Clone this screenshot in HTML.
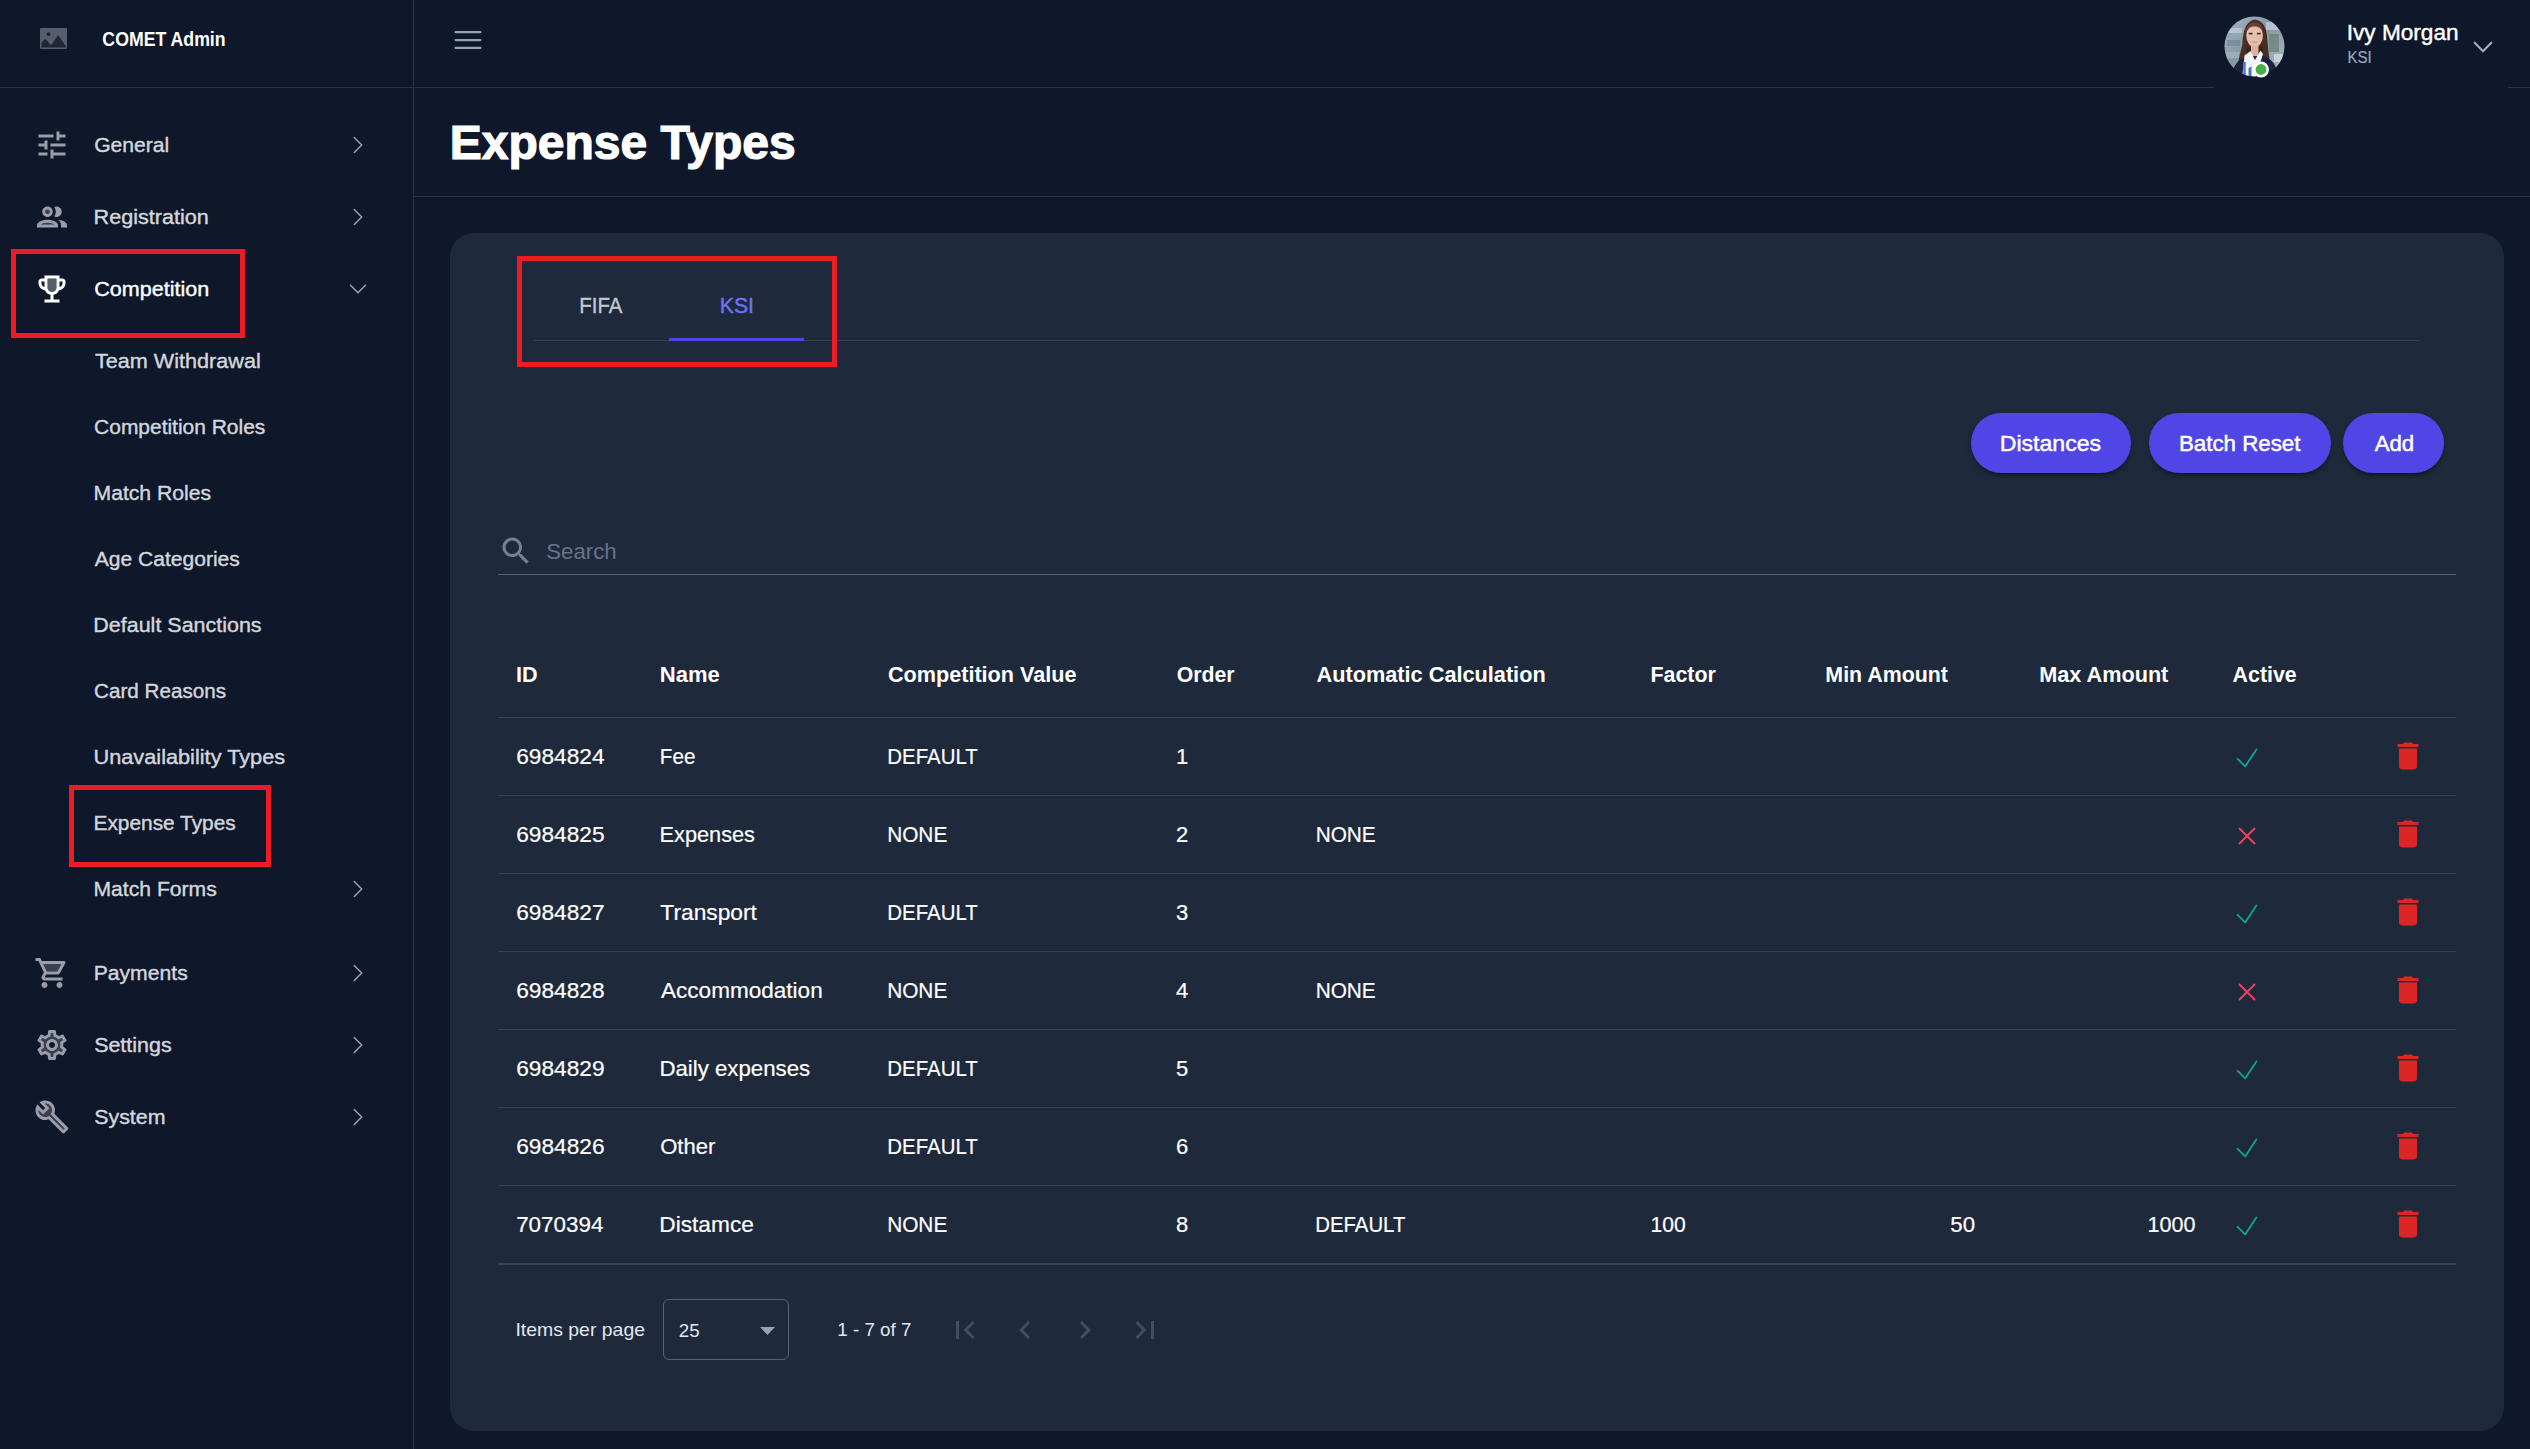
<!DOCTYPE html>
<html lang="en">
<head>
<meta charset="utf-8">
<title>Expense Types - COMET Admin</title>
<style>
*{box-sizing:border-box;margin:0;padding:0}
html{background:#0f172a}
html,body{width:2530px;height:1449px}
body{overflow:hidden;background:#0f172a}
body{font-family:"Liberation Sans",sans-serif;color:#fff;position:relative}
a{text-decoration:none;color:inherit;display:block}
.t{position:absolute;white-space:nowrap;line-height:1;transform:translate(var(--dx,0px),-50%) scaleX(var(--sx,1));transform-origin:left center}
.s{display:inline-block;white-space:nowrap;transform:translateX(var(--dx,0px)) scaleX(var(--sx,1));transform-origin:left center}
svg{display:block;position:absolute;overflow:visible}

/* ---------- sidebar ---------- */
#sidebar{position:absolute;left:0;top:0;width:414px;height:1449px;background:#0f172a;border-right:1px solid #2a3245}
#brand{position:absolute;left:0;top:0;width:413px;height:88px;border-bottom:1px solid #2a3245}
#brand .name{left:102px;top:40px;font-size:19.5px;font-weight:700;color:#fff}
nav .item{position:absolute;left:0;width:413px;height:72px}
nav .item .lbl{left:94px;top:36px;font-size:20.5px;color:#d3d6dc;-webkit-text-stroke:.4px #d3d6dc}
nav .item.active .lbl{color:#fff;-webkit-text-stroke:.4px #fff}
nav .item .ico{left:34px;top:18px;width:36px;height:36px;fill:#9a9eaa}
nav .item.active .ico{fill:#fff}
nav .item .chev{left:346px;top:24px;width:24px;height:24px;fill:none;stroke:#98a4ba;stroke-width:1.5;stroke-linecap:round;stroke-linejoin:round}
nav .sub{height:66px}
nav .sub .lbl{top:33px}
nav .sub .chev{top:21px}
.redbox{position:absolute;border:5px solid #ed1c24;pointer-events:none}

/* ---------- top bar ---------- */
#topbar{position:absolute;left:414px;top:0;width:2116px;height:88px;border-bottom:1px solid #2a3245}
#topbar .menu{left:36px;top:22px;width:36px;height:36px;fill:none;stroke:#94a3b8;stroke-width:1.5;stroke-linecap:round}
#user{position:absolute;left:1800px;top:0;width:294px;height:88px;background:#0f172a}
#user .who{left:134px;top:33px;font-size:22px;color:#fff;-webkit-text-stroke:.4px #fff}
#user .org{left:134px;top:57px;font-size:17px;color:#9aa7ba;-webkit-text-stroke:.2px #9aa7ba}
#user .dd{left:251px;top:29px;width:36px;height:36px;fill:none;stroke:#9fb0ca;stroke-width:1.15;stroke-linecap:round;stroke-linejoin:round}
#user .avatar{left:10px;top:16px;width:61px;height:62px}
#titlebar{position:absolute;left:414px;top:88px;width:2116px;height:109px;border-bottom:1px solid #2a3245}
#titlebar h1{left:37px;top:55px;font-size:48px;font-weight:700;color:#fff;-webkit-text-stroke:1.2px #fff}

/* ---------- card ---------- */
#card{position:absolute;left:450px;top:233px;width:2054px;height:1198px;border-radius:24px;background:#1e293b}
#tabs{position:absolute;left:84px;top:36px;width:1886px;height:72px;border-bottom:1px solid #354052}
#tabs .tab{position:absolute;top:0;width:135px;height:72px;text-align:center;font-size:22px;line-height:73px;color:#c3c8d0;-webkit-text-stroke:.4px currentColor}
#tabs .tab.on{color:#6e72f4}
#tabs .ink{position:absolute;left:135px;top:69px;width:135px;height:3px;background:#4f46e5}
#actions{position:absolute;right:60px;top:180px;height:60px;display:flex}
#actions .btn{height:60px;border-radius:30px;background:#4f46e5;color:#fff;font-size:21.5px;font-weight:400;-webkit-text-stroke:.45px #fff;line-height:62px;text-align:center;box-shadow:0 4px 3px -2px rgba(0,0,0,.3),0 3px 6px 0 rgba(0,0,0,.2)}
#search{position:absolute;left:48px;top:300px;width:1958px;height:42px;border-bottom:1px solid #56627a}
#search .mag{left:0;top:0;width:36px;height:36px;fill:#72819a}
#search .ph{left:48px;top:19px;font-size:22px;color:#64748b}

#grid{position:absolute;left:48px;top:400px;width:1958px;border-collapse:collapse;table-layout:fixed;font-size:22px}
#grid th,#grid td{padding:0 0 0 18px;text-align:left;white-space:nowrap;position:relative;border-bottom:1px solid #354052;overflow:visible}
#grid th{height:84px;padding-top:1px;font-weight:700;font-size:22px}
#grid td{height:78px;padding-top:2px;font-weight:400;-webkit-text-stroke:.2px #fff}
#grid tbody tr:last-child td{border-bottom:1px solid #3b4557}
.s.c{transform-origin:center center}
#grid .c-min,#grid .c-max{text-align:right}
#grid td.c-min .s,#grid td.c-max .s{transform-origin:right center}
#grid th.c-min,#grid th.c-max{text-align:left}
#grid td.c-min{padding-right:47px}
#grid td.c-max{padding-right:18px}
#grid svg.ok,#grid svg.no{left:18px;top:25px;width:30px;height:30px;fill:none;stroke-width:1.5;stroke-linecap:round;stroke-linejoin:round}
#grid svg.ok{stroke:#10a293}
#grid svg.no{stroke:#f43f5e}
#grid svg.del{left:17.800px;top:20.600px;width:36px;height:36px;fill:#dc2626}

#pager{position:absolute;left:48px;top:1031px;width:1958px;height:130px;border-top:1px solid #3b4557;font-size:19px;color:#e2e8f0}
#pager .lab{left:18px;top:64px}
#pager .sel{position:absolute;left:165px;top:34px;width:126px;height:61px;border:1px solid #56627a;border-radius:6px}
#pager .sel .v{left:14px;top:30px}
#pager .sel svg{left:96px;top:27px;width:15px;height:8px;fill:#94a3b8}
#pager .rng{left:339px;top:64px}
#pager .nav{top:47px;width:36px;height:36px;fill:#414d61}
</style>
</head>
<body>

<aside id="sidebar">
  <div id="brand">
    <svg style="left:40px;top:28px" width="27" height="21" viewBox="0 0 27 21"><rect width="27" height="21" rx="1" fill="#555d6f"/><path d="M1.500 14.500 5.300 10.800 11 17.300 18.200 7 26 18.500V19.500H1.500z" fill="#1f2636"/><circle cx="8.500" cy="6.200" r="1.900" fill="#1f2636"/></svg>
    <span class="t name" style="--sx:0.9079;--dx:0.34px">COMET Admin</span>
  </div>
  <nav id="nav">
    <a class="item" style="top:109px"><svg class="ico" viewBox="0 0 24 24"><path d="M3 17v2h6v-2H3zM3 5v2h10V5H3zm10 16v-2h8v-2h-8v-2h-2v6h2zM7 9v2H3v2h4v2h2V9H7zm14 4v-2H11v2h10zm-6-4h2V7h4V5h-4V3h-2v6z"/></svg><span class="t lbl" style="--sx:1.0291;--dx:0.16px">General</span><svg class="chev" viewBox="0 0 24 24"><path d="M8.250 4.500l7.500 7.500-7.500 7.500"/></svg></a>
    <a class="item" style="top:181px"><svg class="ico" viewBox="0 0 24 24"><circle cx="9" cy="8.5" r="1.5" opacity=".3"/><path d="M4.34 17h9.32c-.84-.58-2.87-1.25-4.66-1.25s-3.82.67-4.66 1.25z" opacity=".3"/><path d="M9 12c1.93 0 3.500-1.570 3.500-3.500S10.930 5 9 5 5.500 6.570 5.500 8.500 7.070 12 9 12zm0-5c.83 0 1.500.67 1.500 1.500S9.830 10 9 10s-1.500-.67-1.500-1.500S8.170 7 9 7zm0 6.750c-2.340 0-7 1.170-7 3.500V19h14v-1.750c0-2.330-4.660-3.500-7-3.500zM4.340 17c.84-.58 2.870-1.250 4.660-1.250s3.820.67 4.660 1.250H4.340zm11.700-3.190c1.160.84 1.960 1.960 1.960 3.440V19h4v-1.750c0-2.020-3.500-3.170-5.960-3.440zM15 12c1.930 0 3.500-1.570 3.500-3.500S16.930 5 15 5c-.54 0-1.040.13-1.500.35.63.89 1 1.980 1 3.150s-.37 2.260-1 3.150c.46.22.96.35 1.500.35z"/></svg><span class="t lbl" style="--sx:1.0531;--dx:-0.41px">Registration</span><svg class="chev" viewBox="0 0 24 24"><path d="M8.250 4.500l7.500 7.500-7.500 7.500"/></svg></a>
    <a class="item active" style="top:253px"><svg class="ico" viewBox="0 0 24 24"><path d="M12 14c-1.650 0-3-1.350-3-3V5h6v6c0 1.650-1.350 3-3 3z" opacity=".3"/><path d="M19 5h-2V3H7v2H5c-1.100 0-2 .9-2 2v1c0 2.550 1.920 4.630 4.390 4.940.63 1.500 1.980 2.630 3.610 2.960V19H7v2h10v-2h-4v-3.100c1.630-.33 2.980-1.460 3.610-2.960C19.080 12.630 21 10.550 21 8V7c0-1.100-.9-2-2-2zM5 8V7h2v3.820C5.840 10.400 5 9.300 5 8zm7 6c-1.650 0-3-1.350-3-3V5h6v6c0 1.650-1.350 3-3 3zm7-6c0 1.300-.84 2.400-2 2.820V7h2v1z"/></svg><span class="t lbl" style="--sx:1.0510;--dx:0.28px">Competition</span><svg class="chev" viewBox="0 0 24 24"><path d="M19.500 8.250l-7.500 7.500-7.500-7.500"/></svg></a>
    <a class="item sub" style="top:328px"><span class="t lbl" style="--sx:1.0551;--dx:0.91px">Team Withdrawal</span></a>
    <a class="item sub" style="top:394px"><span class="t lbl" style="--sx:1.0220;--dx:0.10px">Competition Roles</span></a>
    <a class="item sub" style="top:460px"><span class="t lbl" style="--sx:1.0309;--dx:-0.46px">Match Roles</span></a>
    <a class="item sub" style="top:526px"><span class="t lbl" style="--sx:1.0255;--dx:0.85px">Age Categories</span></a>
    <a class="item sub" style="top:592px"><span class="t lbl" style="--sx:1.0469;--dx:-0.65px">Default Sanctions</span></a>
    <a class="item sub" style="top:658px"><span class="t lbl" style="--sx:1.0073;--dx:0.04px">Card Reasons</span></a>
    <a class="item sub" style="top:724px"><span class="t lbl" style="--sx:1.0597;--dx:-0.49px">Unavailability Types</span></a>
    <a class="item sub current" style="top:790px"><span class="t lbl" style="--sx:1.0174;--dx:-0.49px">Expense Types</span></a>
    <a class="item sub" style="top:856px"><span class="t lbl" style="--sx:1.0307;--dx:-0.50px">Match Forms</span><svg class="chev" viewBox="0 0 24 24"><path d="M8.250 4.500l7.500 7.500-7.500 7.500"/></svg></a>
    <a class="item" style="top:937px"><svg class="ico" viewBox="0 0 24 24"><path d="M15.550 11l2.760-5H6.160l2.370 5z" opacity=".3"/><path d="M15.550 13c.75 0 1.410-.41 1.750-1.030l3.580-6.490c.37-.66-.11-1.480-.87-1.480H5.210l-.94-2H1v2h2l3.600 7.590-1.350 2.440C4.520 15.370 5.480 17 7 17h12v-2H7l1.100-2h7.450zM6.160 6h12.150l-2.760 5H8.530L6.160 6zM7 18c-1.100 0-1.990.9-1.990 2S5.900 22 7 22s2-.9 2-2-.9-2-2-2zm10 0c-1.100 0-1.990.9-1.990 2s.89 2 1.990 2 2-.9 2-2-.9-2-2-2z"/></svg><span class="t lbl" style="--sx:1.0325;--dx:-0.36px">Payments</span><svg class="chev" viewBox="0 0 24 24"><path d="M8.250 4.500l7.500 7.500-7.500 7.500"/></svg></a>
    <a class="item" style="top:1009px"><svg class="ico" viewBox="0 0 24 24"><path d="M19.28 8.6l-0.7-1.21-1.27 0.51-1.06 0.43-0.91-0.7c-0.39-0.3-0.8-0.54-1.23-0.71l-1.06-0.43-0.16-1.13L12.7 4h-1.4l-0.19 1.35-0.16 1.13-1.06 0.44c-0.41 0.17-0.82 0.41-1.25 0.73l-0.9 0.68-1.05-0.42-1.27-0.51-0.7 1.21 1.08 0.84 0.89 0.7-0.14 1.13c-0.03 0.3-0.05 0.53-0.05 0.73s0.02 0.43 0.05 0.73l0.14 1.13-0.89 0.7-1.08 0.84 0.7 1.21 1.27-0.51 1.06-0.43 0.91 0.7c0.39 0.3 0.8 0.54 1.23 0.71l1.06 0.43 0.16 1.13 0.19 1.36h1.39l0.19-1.35 0.16-1.13 1.06-0.43c0.41-0.17 0.82-0.41 1.25-0.73l0.9-0.68 1.04 0.42 1.27 0.51 0.7-1.21-1.08-0.84-0.89-0.7 0.14-1.13c0.04-0.31 0.05-0.52 0.05-0.73 0-0.21-0.02-0.43-0.05-0.73l-0.14-1.13 0.89-0.7 1.1-0.84zM12 16c-2.21 0-4-1.79-4-4s1.79-4 4-4 4 1.79 4 4-1.79 4-4 4z" opacity=".3"/><path d="M19.43 12.98c0.04-0.32 0.07-0.64 0.07-0.98 0-0.34-0.03-0.66-0.07-0.98l2.11-1.65c0.19-0.15 0.24-0.42 0.12-0.64l-2-3.46c-0.09-0.16-0.26-0.25-0.44-0.25-0.06 0-0.12 0.01-0.17 0.03l-2.49 1c-0.52-0.4-1.08-0.73-1.69-0.98l-0.38-2.65C14.46 2.18 14.25 2 14 2h-4c-0.25 0-0.46 0.18-0.49 0.42l-0.38 2.65c-0.61 0.25-1.17 0.59-1.69 0.98l-2.49-1c-0.06-0.02-0.12-0.03-0.18-0.03-0.17 0-0.34 0.09-0.43 0.25l-2 3.46c-0.13 0.22-0.07 0.49 0.12 0.64l2.11 1.65c-0.04 0.32-0.07 0.65-0.07 0.98 0 0.33 0.03 0.66 0.07 0.98l-2.11 1.65c-0.19 0.15-0.24 0.42-0.12 0.64l2 3.46c0.09 0.16 0.26 0.25 0.44 0.25 0.06 0 0.12-0.01 0.17-0.03l2.49-1c0.52 0.4 1.08 0.73 1.69 0.98l0.38 2.65c0.03 0.24 0.24 0.42 0.49 0.42h4c0.25 0 0.46-0.18 0.49-0.42l0.38-2.65c0.61-0.25 1.17-0.59 1.69-0.98l2.49 1c0.06 0.02 0.12 0.03 0.18 0.03 0.17 0 0.34-0.09 0.43-0.25l2-3.46c0.12-0.22 0.07-0.49-0.12-0.64l-2.11-1.65zm-1.98-1.71c0.04 0.31 0.05 0.52 0.05 0.73 0 0.21-0.02 0.43-0.05 0.73l-0.14 1.13 0.89 0.7 1.08 0.84-0.7 1.21-1.27-0.51-1.04-0.42-0.9 0.68c-0.43 0.32-0.84 0.56-1.25 0.73l-1.06 0.43-0.16 1.13-0.2 1.35h-1.4l-0.19-1.35-0.16-1.13-1.06-0.43c-0.43-0.18-0.83-0.41-1.23-0.71l-0.91-0.7-1.06 0.43-1.27 0.51-0.7-1.21 1.08-0.84 0.89-0.7-0.14-1.13c-0.03-0.31-0.05-0.54-0.05-0.74s0.02-0.43 0.05-0.73l0.14-1.13-0.89-0.7-1.08-0.84 0.7-1.21 1.27 0.51 1.04 0.42 0.9-0.68c0.43-0.32 0.84-0.56 1.25-0.73l1.06-0.43 0.16-1.13 0.2-1.35h1.39l0.19 1.35 0.16 1.13 1.06 0.43c0.43 0.18 0.83 0.41 1.23 0.71l0.91 0.7 1.06-0.43 1.27-0.51 0.7 1.21-1.07 0.85-0.89 0.7 0.14 1.13zM12 8c-2.21 0-4 1.79-4 4s1.79 4 4 4 4-1.79 4-4-1.79-4-4-4zm0 6c-1.1 0-2-0.9-2-2s0.9-2 2-2 2 0.9 2 2-0.9 2-2 2z"/></svg><span class="t lbl" style="--sx:1.0458;--dx:0.13px">Settings</span><svg class="chev" viewBox="0 0 24 24"><path d="M8.250 4.500l7.500 7.500-7.500 7.500"/></svg></a>
    <a class="item" style="top:1081px"><svg class="ico" viewBox="0 0 24 24"><path d="M11.920 8.280c.24-1.400-.16-2.890-1.240-3.960-.94-.95-2.200-1.390-3.440-1.320l3.090 3.090-4.240 4.240L3 7.240c-.07 1.240.37 2.490 1.310 3.440 1.040 1.040 2.470 1.450 3.830 1.250.71-.1 1.400-.38 2-.82l9.460 9.460.88-.88-9.450-9.450c.47-.6.77-1.260.89-1.960z" opacity=".3"/><path d="M22.610 18.970L13.540 9.900c.93-2.340.45-5.100-1.440-7C9.800.6 6.220.39 3.670 2.250L7.500 6.080 6.080 7.500 2.250 3.670C.39 6.210.6 9.790 2.900 12.090c1.860 1.860 4.570 2.350 6.890 1.480l9.110 9.110c.39.39 1.020.39 1.410 0l2.300-2.300c.4-.38.4-1.020 0-1.410zm-3 1.600l-9.460-9.460c-.61.45-1.290.72-2 .82-1.360.2-2.790-.21-3.830-1.250C3.370 9.740 2.930 8.490 3 7.250l3.090 3.090 4.240-4.240-3.090-3.090c1.240-.07 2.490.37 3.440 1.310 1.080 1.080 1.490 2.570 1.240 3.960-.12.7-.42 1.360-.88 1.950l9.450 9.450-.88.89z"/></svg><span class="t lbl" style="--sx:1.0424;--dx:0.21px">System</span><svg class="chev" viewBox="0 0 24 24"><path d="M8.250 4.500l7.500 7.500-7.500 7.500"/></svg></a>
    <div class="redbox" style="left:11px;top:249px;width:234px;height:89px"></div>
    <div class="redbox" style="left:69px;top:785px;width:202px;height:82px"></div>
  </nav>
</aside>

<header id="topbar">
  <svg class="menu" viewBox="0 0 24 24"><path d="M3.750 6.750h16.500M3.750 12h16.500M3.750 17.250h16.500"/></svg>
  <div id="user">
    <svg class="avatar" viewBox="0 0 61 62">
      <defs>
        <clipPath id="avc"><circle cx="30.5" cy="30.5" r="30"/></clipPath>
        <linearGradient id="avbg" x1="0" y1="0" x2="1" y2="1"><stop offset="0" stop-color="#a9bac6"/><stop offset=".45" stop-color="#8497a6"/><stop offset="1" stop-color="#b4bfc8"/></linearGradient>
        <filter id="avb" x="-10%" y="-10%" width="120%" height="120%"><feGaussianBlur stdDeviation=".7"/></filter>
      </defs>
      <g clip-path="url(#avc)"><g filter="url(#avb)">
        <rect x="-2" y="-2" width="65" height="66" fill="url(#avbg)"/>
        <rect x="2" y="12" width="16" height="5" fill="#c3d0d9" opacity=".7"/><rect x="3" y="24" width="13" height="6" fill="#71879a" opacity=".7"/>
        <rect x="1" y="36" width="14" height="6" fill="#9fb1bf" opacity=".8"/><rect x="42" y="6" width="12" height="8" fill="#c9d4dc" opacity=".7"/>
        <rect x="45" y="18" width="10" height="18" fill="#71857a" opacity=".8"/><rect x="50" y="38" width="9" height="8" fill="#d5dbe0" opacity=".8"/>
        <path d="M14 47c1-6 3-12 4.500-19C19 17 21 5 31 3.500 41 5 43 15 43.500 25c.5 8 1.500 15 2.500 22z" fill="#4a2d20"/>
        <path d="M22 31h17v12H22z" fill="#3b2419"/>
        <ellipse cx="30.600" cy="19.500" rx="8.300" ry="11.800" fill="#e4bfab"/>
        <path d="M22.300 17C22 10 25 6.500 30.500 6.500S39 10 39 17c-1.500-4-3.500-6.500-8.500-6.500S24 13 22.300 17z" fill="#6a4331"/>
        <rect x="24.500" y="16.700" width="4.300" height="1.700" rx=".8" fill="#4e362e"/><rect x="32.700" y="16.700" width="4.300" height="1.700" rx=".8" fill="#4e362e"/>
        <path d="M26.500 25.300q4.200 3.200 8.400 0-4.200 1-8.400 0z" fill="#c78488"/>
        <path d="M27 29.500h7.500V40H27z" fill="#dcb29c"/>
        <path d="M8 63c0-12 5-19 13-21.500l10 8 8-9.500c9 2.500 15 10 15 23z" fill="#1a2140"/>
        <path d="M20.500 39.500l6-4.500 4.500 9 5.500-9.500 2.500 3.500-8 25h-13z" fill="#f1f4f8"/>
        <path d="M19.300 46h2.400v16h-2.400zM24.500 52l3-1.500V62h-3z" fill="#4d72c6"/>
      </g></g>
      <circle cx="37" cy="53.500" r="8" fill="#fff"/><circle cx="37" cy="53.500" r="5.400" fill="#45b049"/>
    </svg>
    <span class="t who" style="--sx:1.0275;--dx:-1.23px">Ivy Morgan</span>
    <span class="t org" style="--sx:0.8828;--dx:-0.52px">KSI</span>
    <svg class="dd" viewBox="0 0 20 20"><path d="M5.4 7.6 10 12.4l4.6-4.8"/></svg>
  </div>
</header>

<section id="titlebar"><h1 class="t" style="--dx:-1.22px">Expense Types</h1></section>

<main id="card">
  <div id="tabs">
    <a class="tab" style="left:0"><span class="s c" style="--sx:0.9262;--dx:-0.39px">FIFA</span></a>
    <a class="tab on" style="left:135px"><span class="s c" style="--sx:0.9638;--dx:0.18px">KSI</span></a>
    <span class="ink"></span>
  </div>
  <div class="redbox" style="left:67px;top:23px;width:320px;height:111px"></div>

  <div id="actions">
    <a class="btn" style="width:160px"><span class="s c" style="--sx:1.0725;--dx:-0.76px">Distances</span></a>
    <a class="btn" style="width:182px;margin-left:18px"><span class="s c" style="--sx:1.0383;--dx:0.12px">Batch Reset</span></a>
    <a class="btn" style="width:101px;margin-left:12px"><span class="s c" style="--sx:1.0328;--dx:1.30px">Add</span></a>
  </div>

  <div id="search">
    <svg class="mag" viewBox="0 0 24 24"><path d="M15.500 14h-.79l-.28-.27C15.410 12.590 16 11.110 16 9.500 16 5.910 13.090 3 9.500 3S3 5.910 3 9.500 5.910 16 9.500 16c1.610 0 3.090-.59 4.230-1.570l.27.28v.79l5 4.990L20.490 19l-4.990-5zm-6 0C7.010 14 5 11.990 5 9.500S7.010 5 9.500 5 14 7.010 14 9.500 11.990 14 9.500 14z"/></svg>
    <span class="t ph" style="--sx:1.0105;--dx:0.28px">Search</span>
  </div>

  <table id="grid"><colgroup><col style="width:144px"><col style="width:228px"><col style="width:288px"><col style="width:140px"><col style="width:334px"><col style="width:175px"><col style="width:215px"><col style="width:192px"><col style="width:158px"><col style="width:84px"></colgroup><thead><tr><th class="c-id"><span class="s" style="--sx:0.9806;--dx:-0.11px">ID</span></th><th class="c-name"><span class="s" style="--sx:1.0014;--dx:-0.15px">Name</span></th><th class="c-cv"><span class="s" style="--sx:0.9829;--dx:-0.08px">Competition Value</span></th><th class="c-ord"><span class="s" style="--sx:0.9665;--dx:0.74px">Order</span></th><th class="c-ac"><span class="s" style="--sx:0.9862;--dx:0.61px">Automatic Calculation</span></th><th class="c-fac"><span class="s" style="--sx:0.9727;--dx:0.49px">Factor</span></th><th class="c-min"><span class="s" style="--sx:0.9711;--dx:0.34px">Min Amount</span></th><th class="c-max"><span class="s" style="--sx:0.9842;--dx:-0.78px">Max Amount</span></th><th class="c-act"><span class="s" style="--sx:0.9695;--dx:0.61px">Active</span></th><th class="c-del"></th></tr></thead><tbody>
      <tr><td class="c-id"><span class="s" style="--sx:1.0309;--dx:0.26px">6984824</span></td><td class="c-name"><span class="s" style="--sx:0.9384;--dx:-0.21px">Fee</span></td><td class="c-cv"><span class="s" style="--sx:0.9283;--dx:-0.70px">DEFAULT</span></td><td class="c-ord"><span class="s">1</span></td><td class="c-ac"></td><td class="c-fac"></td><td class="c-min"></td><td class="c-max"></td><td class="c-act"><svg class="ok" viewBox="0 0 24 24"><path d="M4.500 12.750l6 6 9-13.500"/></svg></td><td class="c-del"><svg class="del" viewBox="0 0 24 24"><path d="M6 19c0 1.100.9 2 2 2h8c1.100 0 2-.9 2-2V7H6v12zM19 4h-3.500l-1-1h-5l-1 1H5v2h14V4z"/></svg></td></tr>
      <tr><td class="c-id"><span class="s" style="--sx:1.0309;--dx:0.26px">6984825</span></td><td class="c-name"><span class="s" style="--sx:0.9864;--dx:-0.40px">Expenses</span></td><td class="c-cv"><span class="s" style="--sx:0.9457;--dx:-0.85px">NONE</span></td><td class="c-ord"><span class="s">2</span></td><td class="c-ac"><span class="s" style="--sx:0.9450;--dx:-0.36px">NONE</span></td><td class="c-fac"></td><td class="c-min"></td><td class="c-max"></td><td class="c-act"><svg class="no" viewBox="0 0 24 24"><path d="M6 18L18 6M6 6l12 12"/></svg></td><td class="c-del"><svg class="del" viewBox="0 0 24 24"><path d="M6 19c0 1.100.9 2 2 2h8c1.100 0 2-.9 2-2V7H6v12zM19 4h-3.500l-1-1h-5l-1 1H5v2h14V4z"/></svg></td></tr>
      <tr><td class="c-id"><span class="s" style="--sx:1.0309;--dx:0.26px">6984827</span></td><td class="c-name"><span class="s" style="--sx:1.0343;--dx:0.35px">Transport</span></td><td class="c-cv"><span class="s" style="--sx:0.9283;--dx:-0.70px">DEFAULT</span></td><td class="c-ord"><span class="s">3</span></td><td class="c-ac"></td><td class="c-fac"></td><td class="c-min"></td><td class="c-max"></td><td class="c-act"><svg class="ok" viewBox="0 0 24 24"><path d="M4.500 12.750l6 6 9-13.500"/></svg></td><td class="c-del"><svg class="del" viewBox="0 0 24 24"><path d="M6 19c0 1.100.9 2 2 2h8c1.100 0 2-.9 2-2V7H6v12zM19 4h-3.500l-1-1h-5l-1 1H5v2h14V4z"/></svg></td></tr>
      <tr><td class="c-id"><span class="s" style="--sx:1.0309;--dx:0.26px">6984828</span></td><td class="c-name"><span class="s" style="--sx:1.0247;--dx:1.04px">Accommodation</span></td><td class="c-cv"><span class="s" style="--sx:0.9457;--dx:-0.85px">NONE</span></td><td class="c-ord"><span class="s">4</span></td><td class="c-ac"><span class="s" style="--sx:0.9450;--dx:-0.36px">NONE</span></td><td class="c-fac"></td><td class="c-min"></td><td class="c-max"></td><td class="c-act"><svg class="no" viewBox="0 0 24 24"><path d="M6 18L18 6M6 6l12 12"/></svg></td><td class="c-del"><svg class="del" viewBox="0 0 24 24"><path d="M6 19c0 1.100.9 2 2 2h8c1.100 0 2-.9 2-2V7H6v12zM19 4h-3.500l-1-1h-5l-1 1H5v2h14V4z"/></svg></td></tr>
      <tr><td class="c-id"><span class="s" style="--sx:1.0309;--dx:0.26px">6984829</span></td><td class="c-name"><span class="s" style="--sx:1.0108;--dx:-0.62px">Daily expenses</span></td><td class="c-cv"><span class="s" style="--sx:0.9283;--dx:-0.70px">DEFAULT</span></td><td class="c-ord"><span class="s">5</span></td><td class="c-ac"></td><td class="c-fac"></td><td class="c-min"></td><td class="c-max"></td><td class="c-act"><svg class="ok" viewBox="0 0 24 24"><path d="M4.500 12.750l6 6 9-13.500"/></svg></td><td class="c-del"><svg class="del" viewBox="0 0 24 24"><path d="M6 19c0 1.100.9 2 2 2h8c1.100 0 2-.9 2-2V7H6v12zM19 4h-3.500l-1-1h-5l-1 1H5v2h14V4z"/></svg></td></tr>
      <tr><td class="c-id"><span class="s" style="--sx:1.0309;--dx:0.26px">6984826</span></td><td class="c-name"><span class="s" style="--sx:1.0023;--dx:0.20px">Other</span></td><td class="c-cv"><span class="s" style="--sx:0.9283;--dx:-0.70px">DEFAULT</span></td><td class="c-ord"><span class="s">6</span></td><td class="c-ac"></td><td class="c-fac"></td><td class="c-min"></td><td class="c-max"></td><td class="c-act"><svg class="ok" viewBox="0 0 24 24"><path d="M4.500 12.750l6 6 9-13.500"/></svg></td><td class="c-del"><svg class="del" viewBox="0 0 24 24"><path d="M6 19c0 1.100.9 2 2 2h8c1.100 0 2-.9 2-2V7H6v12zM19 4h-3.500l-1-1h-5l-1 1H5v2h14V4z"/></svg></td></tr>
      <tr><td class="c-id"><span class="s" style="--sx:1.0186;--dx:0.14px">7070394</span></td><td class="c-name"><span class="s" style="--sx:1.0310;--dx:-0.69px">Distamce</span></td><td class="c-cv"><span class="s" style="--sx:0.9457;--dx:-0.85px">NONE</span></td><td class="c-ord"><span class="s">8</span></td><td class="c-ac"><span class="s" style="--sx:0.9251;--dx:-0.75px">DEFAULT</span></td><td class="c-fac"><span class="s" style="--sx:0.9591;--dx:0.41px">100</span></td><td class="c-min"><span class="s" style="--sx:1.0129;--dx:-0.45px">50</span></td><td class="c-max"><span class="s" style="--sx:0.9807;--dx:-0.33px">1000</span></td><td class="c-act"><svg class="ok" viewBox="0 0 24 24"><path d="M4.500 12.750l6 6 9-13.500"/></svg></td><td class="c-del"><svg class="del" viewBox="0 0 24 24"><path d="M6 19c0 1.100.9 2 2 2h8c1.100 0 2-.9 2-2V7H6v12zM19 4h-3.500l-1-1h-5l-1 1H5v2h14V4z"/></svg></td></tr>
    </tbody></table>

  <div id="pager">
    <span class="t lab" style="--sx:1.0221;--dx:-0.56px">Items per page</span>
    <div class="sel"><span class="t v" style="--sx:0.9851;--dx:0.77px">25</span><svg viewBox="0 0 15 8"><path d="M0 0h15L7.500 8z"/></svg></div>
    <span class="t rng" style="--sx:0.9871;--dx:0.34px">1 - 7 of 7</span>
    <svg class="nav" style="left:449px" viewBox="0 0 24 24"><path d="M18.410 16.590L13.820 12l4.590-4.590L17 6l-6 6 6 6zM6 6h2v12H6z"/></svg>
    <svg class="nav" style="left:509px" viewBox="0 0 24 24"><path d="M15.410 7.410L14 6l-6 6 6 6 1.410-1.410L10.830 12z"/></svg>
    <svg class="nav" style="left:569px" viewBox="0 0 24 24"><path d="M10 6L8.590 7.410 13.170 12l-4.580 4.590L10 18l6-6z"/></svg>
    <svg class="nav" style="left:629px" viewBox="0 0 24 24"><path d="M5.590 7.410L10.180 12l-4.590 4.590L7 18l6-6-6-6zM16 6h2v12h-2z"/></svg>
  </div>
</main>

</body>
</html>
